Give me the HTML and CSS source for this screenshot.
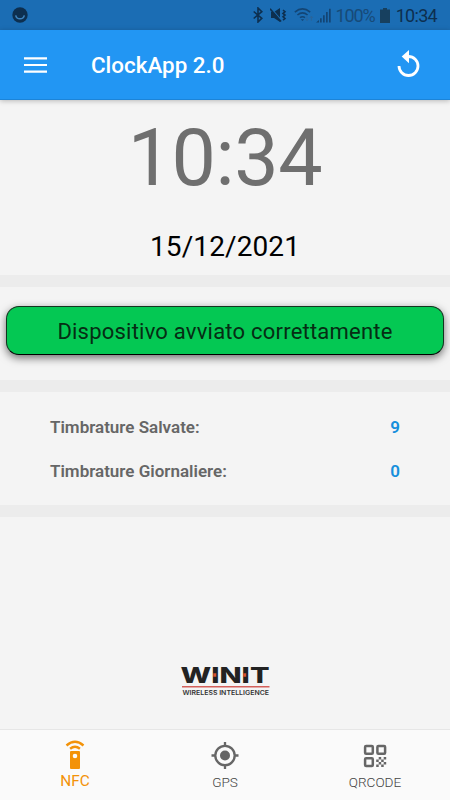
FILE: index.html
```html
<!DOCTYPE html>
<html lang="it">
<head>
  <meta charset="UTF-8" />
  <meta name="viewport" content="width=device-width, initial-scale=1.0"/>
  <title>ClockApp 2.0</title>
  <link rel="stylesheet" href="styles.css">
</head>
<body>
  <div class="app">
    <div class="status-bar">
      <svg class="notification" width="16" height="16" viewBox="0 0 16 16">
        <circle cx="8" cy="8" r="7.7" fill="#0d2f4f"/>
        <path d="M3.7 8.3a4.4 4.4 0 0 0 8.6 0" fill="none" stroke="#3d83bd" stroke-width="1.6"/>
      </svg>
      <div class="status-icons">
        <svg class="bluetooth" width="10" height="16" viewBox="0 0 10 16">
          <path d="M.7 4.5 8.8 11.3 5 15V1l3.8 3.7-8.1 6.8" fill="none" stroke="#0d2f4f" stroke-width="1.6"/>
        </svg>
        <svg class="muted" width="17" height="16" viewBox="0 0 17 16">
          <path d="M1 5h3l6-4v14l-6-4H1z" fill="#0d2f4f"/>
          <path d="M1 1.2 12 14" stroke="#1b6db4" stroke-width="1.2"/>
          <path d="M0 1.8 11 14.6" stroke="#0d2f4f" stroke-width="1.6"/>
          <path d="m13 3 2 1.7-2 1.7 2 1.7-2 1.7 2 1.7-2 1.7" fill="none" stroke="#0d2f4f" stroke-width="1.6"/>
        </svg>
        <svg class="wifi" width="20" height="16" viewBox="0 0 20 16">
          <g fill="none" stroke="#134574" stroke-width="1.6">
            <path d="M.8 5.2q7.7-6.5 15.4 0M3.4 8q5.1-4.3 10.2 0M6 10.7q2.5-2 5 0"/>
          </g>
          <path d="M6.8 12.2h3.4L8.5 14z" fill="#134574"/>
          <path d="M13 9v4.5m-1.6-1.7L13 13.6l1.6-1.8M17.4 13.8V9.3m-1.6 1.7 1.6-1.8L19 11" fill="none" stroke="#2a659b" stroke-width="1"/>
        </svg>
        <svg class="signal" width="15" height="15" viewBox="0 0 15 15">
          <path d="M0 14.5 3 12v2.5zM4 10.2h1.7v4.3H4zM7 7.2h1.7v7.3H7zM10 4h1.7v10.5H10zM13 .7h1.7v13.8H13z" fill="#134574"/>
        </svg>
        <span class="battery-level">100%</span>
        <svg class="battery" width="10" height="15" viewBox="0 0 10 15">
          <path d="M3 0h4v1.6h3V15H0V1.6h3z" fill="#17405f"/>
        </svg>
        <span class="status-time">10:34</span>
      </div>
    </div>

    <header class="toolbar">
      <svg width="23" height="16" viewBox="0 0 23 16">
        <path d="M0 1.3h23M0 8h23M0 14.7h23" stroke="#fff" stroke-width="2.2"/>
      </svg>
      <h1>ClockApp 2.0</h1>
      <svg class="refresh" width="24" height="28" viewBox="0 0 24 28">
        <path d="M11.5 6.5A9.5 9.5 0 1 1 2 16" fill="none" stroke="#fff" stroke-width="2.8"/>
        <path d="M12 0v13.2L4.7 6.6z" fill="#fff"/>
      </svg>
    </header>

    <main class="content">
      <section class="clock">
        <div class="time">10:34</div>
        <div class="date">15/12/2021</div>
      </section>

      <section class="message">
        <div class="status-message"><span>Dispositivo avviato correttamente</span></div>
      </section>

      <section class="counters">
        <div class="counter">
          <span>Timbrature Salvate:</span>
          <span class="value">9</span>
        </div>
        <div class="counter">
          <span>Timbrature Giornaliere:</span>
          <span class="value">0</span>
        </div>
      </section>

      <div class="brand">
        <svg width="94" height="42" viewBox="-2 -8 94 42">
          <text class="brand-name" x="0.5" y="16" textLength="89" lengthAdjust="spacingAndGlyphs">WINIT</text>
          <path d="M33.3 6.2h3v3.6h-3zM63.2 6.2h3v3.6h-3z" fill="#d9532f"/>
          <path d="M2 19.7h87.5" stroke="#d4605b" stroke-width="1.5"/>
          <text class="brand-tagline" x="2.5" y="27.5" textLength="86.5" lengthAdjust="spacingAndGlyphs">WIRELESS INTELLIGENCE</text>
        </svg>
      </div>
    </main>

    <nav class="tabs">
      <a class="tab active">
        <svg width="30" height="30" viewBox="0 0 30 30">
          <path d="M6.5 5.5q8.500-7.400 17 0M10.100 8.700q4.900-4 9.800 0" fill="none" stroke="#f39208" stroke-width="2.4"/>
          <path fill-rule="evenodd" d="M11 11h8q1 0 1 1v16q0 1-1 1h-8q-1 0-1-1V12q0-1 1-1zm4 2.700a2.300 2.300 0 1 0 0 4.600 2.300 2.300 0 0 0 0-4.600z" fill="#f39208"/>
        </svg>
        <span>NFC</span>
      </a>
      <a class="tab">
        <svg width="30" height="30" viewBox="0 0 30 30">
          <circle cx="15" cy="15.5" r="9.7" fill="none" stroke="#666" stroke-width="2.3"/>
          <circle cx="15" cy="15.5" r="5" fill="#666"/>
          <path d="M15 2v4M15 25v4M1.5 15.5h4M24.5 15.5h4" stroke="#666" stroke-width="2.3"/>
        </svg>
        <span>GPS</span>
      </a>
      <a class="tab">
        <svg width="30" height="30" viewBox="0 0 30 30">
          <g fill="none" stroke="#666" stroke-width="2.5">
            <rect x="5.1" y="6.1" width="7.7" height="7.7" rx="1"/>
            <rect x="17.4" y="6.1" width="7.7" height="7.7" rx="1"/>
            <rect x="5.1" y="18.2" width="7.7" height="7.7" rx="1"/>
          </g>
          <path d="M18.7 17h2.500v2.500h-2.500zM23.700 17h2.500v2.500h-2.500zM16.200 19.500h2.500V22h-2.500zM21.200 19.500h2.500V22h-2.500zM18.700 22h2.500v2.500h-2.500zM23.700 22h2.500v2.500h-2.500zM16.200 24.500h2.500V27h-2.500zM21.200 24.500h2.500V27h-2.500z" fill="#666"/>
        </svg>
        <span>QRCODE</span>
      </a>
    </nav>
  </div>
</body>
</html>
```
FILE: styles.css
```css
body {
  margin: 0;
  font-family: Roboto, "Liberation Sans", sans-serif;
  background-color: #f4f4f4;
}

.app {
  display: flex;
  flex-direction: column;
  height: 800px;
  overflow: hidden;
}

.status-bar {
  display: flex;
  justify-content: space-between;
  align-items: center;
  box-sizing: border-box;
  height: 30px;
  padding: 0 13px 0 12px;
  background-color: #1b6db4;
  color: #0d2f4f;
}

.status-icons {
  display: flex;
  align-items: center;
}

.muted {
  margin-left: 7px;
}

.wifi {
  margin-left: 7px;
}

.signal {
  margin-left: 2px;
}

.battery-level {
  margin-left: 5px;
  font-size: 18px;
  letter-spacing: -1.1px;
  color: #174a78;
}

.battery {
  margin: 0 6px 0 5px;
}

.status-time {
  font-size: 18px;
  letter-spacing: -0.7px;
}

.toolbar {
  display: flex;
  align-items: center;
  box-sizing: border-box;
  height: 70px;
  padding: 0 29px 0 24px;
  background-color: #2296f3;
  border-bottom: 1px solid #1c84d8;
  box-shadow: 0 1px 5px rgba(0, 0, 0, 0.25);
  z-index: 1;
}

.toolbar h1 {
  margin: 0 0 0 44px;
  font-size: 22.4px;
  font-weight: 500;
  color: white;
}

.refresh {
  margin-left: auto;
  margin-top: -2px;
}

.content {
  display: flex;
  flex-direction: column;
  flex: 1;
}

.clock,
.message,
.counters {
  box-sizing: border-box;
  border-bottom: 12px solid #ececec;
}

.clock {
  height: 187px;
  text-align: center;
}

.time {
  padding-top: 11px;
  font-size: 79px;
  line-height: 94px;
  letter-spacing: -0.4px;
  color: #6f6f6f;
}

.date {
  padding-top: 25px;
  font-size: 28px;
  line-height: 33px;
  letter-spacing: 0.1px;
  color: #000;
}

.message {
  height: 105px;
  padding: 19px 6px 0;
}

.status-message {
  box-sizing: border-box;
  height: 49px;
  border: 1px solid #12351f;
  border-bottom-color: #000;
  border-radius: 13px;
  background-color: #04c853;
  box-shadow: 0 3px 8px rgba(0, 0, 0, 0.55);
  font-size: 22px;
  line-height: 49px;
  letter-spacing: 0.22px;
  text-align: center;
  color: #062d14;
}

.counters {
  height: 125px;
  padding: 13px 50px 0;
}

.counter {
  display: flex;
  justify-content: space-between;
  font-size: 17px;
  font-weight: 600;
  line-height: 44px;
  color: #666;
}

.value {
  color: #168fdc;
}

.brand {
  display: flex;
  justify-content: center;
  padding-top: 142px;
}

.brand-name {
  font-family: Inter, sans-serif;
  font-size: 21px;
  font-weight: 800;
  fill: #222;
}

.brand-tagline {
  font-family: Inter, sans-serif;
  font-size: 6px;
  font-weight: 600;
  fill: #333;
}

.tabs {
  display: grid;
  grid-template-columns: repeat(3, 1fr);
  box-sizing: border-box;
  height: 71px;
  border-top: 1px solid #e6e6e6;
  background-color: #fafafa;
}

.tab {
  display: flex;
  flex-direction: column;
  align-items: center;
  padding-top: 10px;
  font-size: 13.6px;
  font-weight: 300;
  line-height: 24px;
  color: #444;
}

.tab.active {
  font-size: 15.4px;
  font-weight: 400;
  line-height: 22px;
  color: #f39208;
}
```
